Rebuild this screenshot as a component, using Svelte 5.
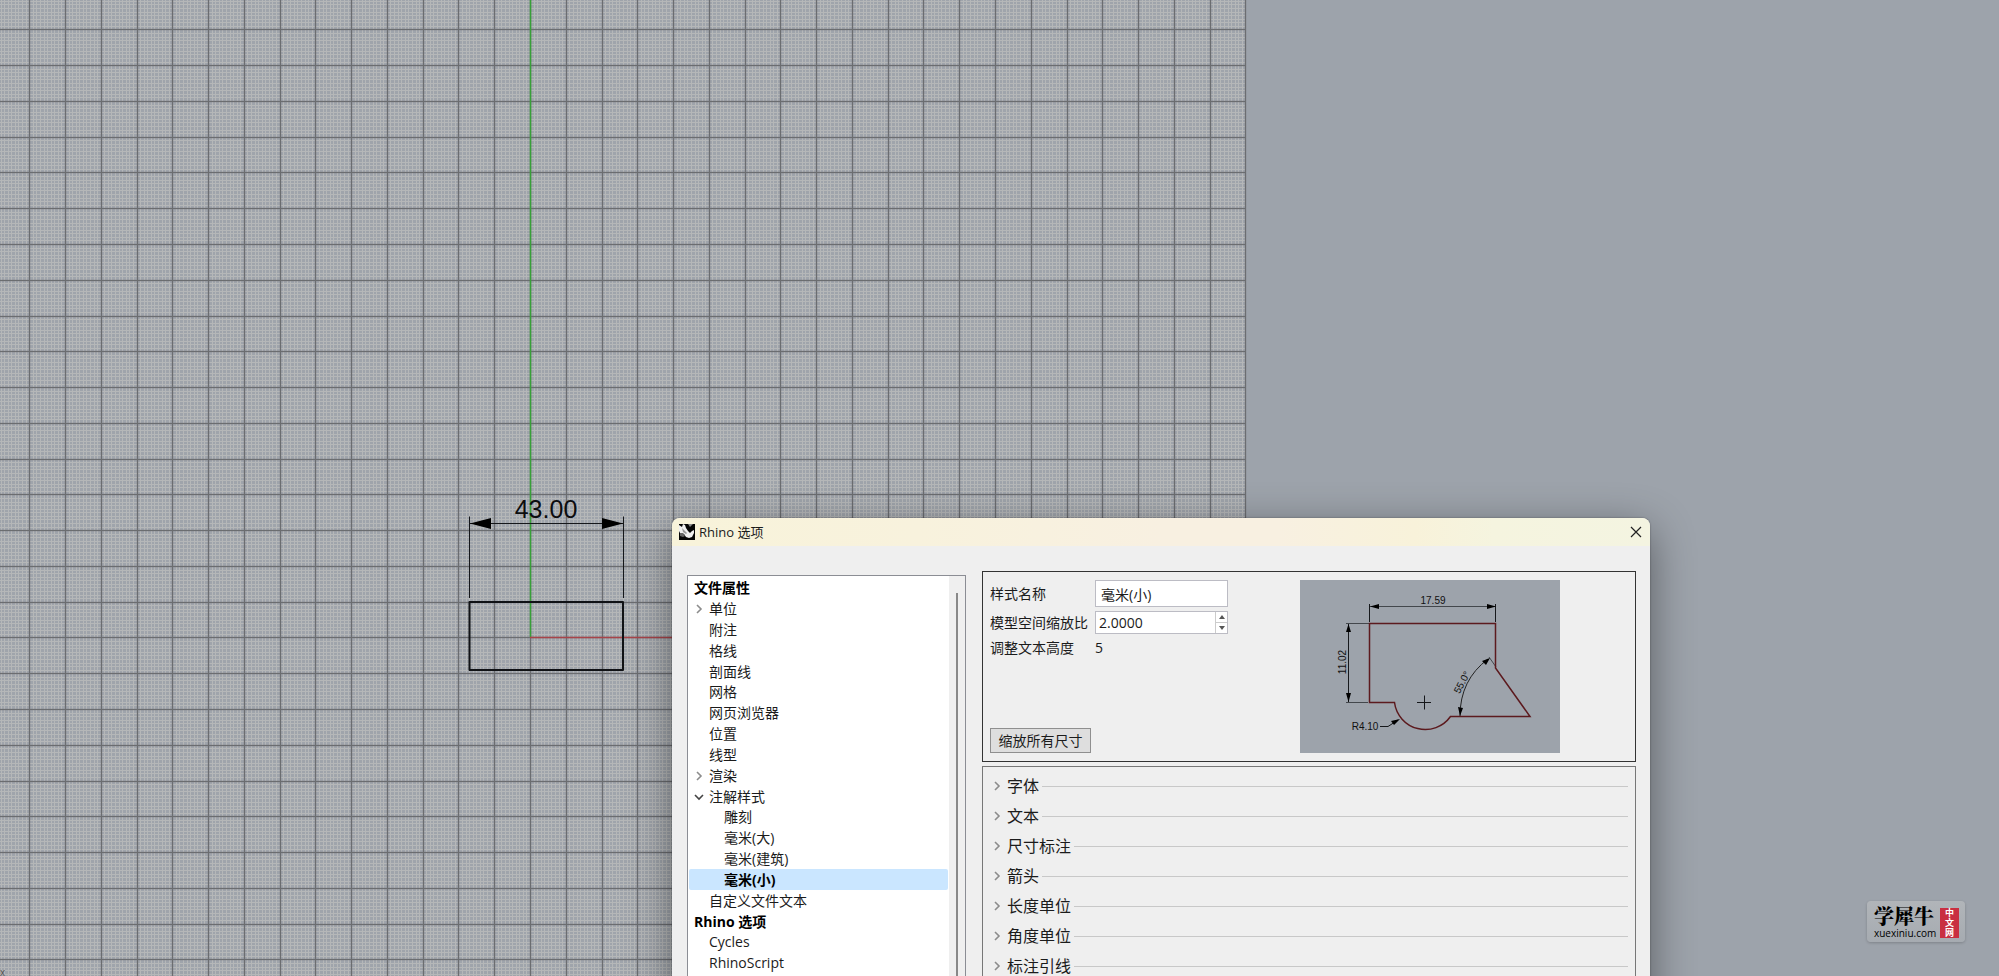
<script>
  const tree = [
    { text: '文件属性', level: 0, bold: true },
    { text: '单位', level: 1, arrow: 'right' },
    { text: '附注', level: 1 },
    { text: '格线', level: 1 },
    { text: '剖面线', level: 1 },
    { text: '网格', level: 1 },
    { text: '网页浏览器', level: 1 },
    { text: '位置', level: 1 },
    { text: '线型', level: 1 },
    { text: '渲染', level: 1, arrow: 'right' },
    { text: '注解样式', level: 1, arrow: 'down' },
    { text: '雕刻', level: 2 },
    { text: '毫米(大)', level: 2 },
    { text: '毫米(建筑)', level: 2 },
    { text: '毫米(小)', level: 2, bold: true, selected: true },
    { text: '自定义文件文本', level: 1 },
    { text: 'Rhino 选项', level: 0, bold: true },
    { text: 'Cycles', level: 1 },
    { text: 'RhinoScript', level: 1 }
  ];
  const sections = ['字体', '文本', '尺寸标注', '箭头', '长度单位', '角度单位', '标注引线'];

  const originX = 530;
  const originY = 637.49;
  const pitch = 35.77;
  const steps = (n, f) => Array.from({ length: n }, (_, i) => f(i));
  const majorX = steps(35, (i) => originX + (i - 14) * pitch);
  const majorY = steps(27, (i) => originY + (i - 17) * pitch);
  const minorX = steps(349, (i) => originX + ((i - 148) * pitch) / 10);
  const minorY = steps(275, (i) => originY + ((i - 178) * pitch) / 10);
  const vertical = (xs) => xs.map((x) => `M${Math.round(x) + 0.5} 0V976`).join('');
  const horizontal = (ys) => ys.map((y) => `M0 ${Math.round(y) + 0.5}H1245`).join('');
  const minorPath = vertical(minorX) + horizontal(minorY);
  const majorPath = vertical(majorX) + horizontal(majorY);

  let name = $state('毫米(小)');
  let scale = $state('2.0000');
</script>

<main class="viewport">
  <svg class="canvas" width="1999" height="976" viewBox="0 0 1999 976" aria-hidden="true">
    <rect width="1245" height="976" fill="#9fa4ab" />
    <path d={minorPath} stroke="#b5b7b8" stroke-width="1" shape-rendering="crispEdges" />
    <path d={majorPath} stroke="#6b6d70" stroke-opacity="0.3" stroke-width="2" />
    <path d={majorPath} stroke="#6b6d70" stroke-width="1" shape-rendering="crispEdges" />
    <path d="M530.5 0V637" stroke="#37a037" stroke-width="1.5" />
    <path d="M530 637.5H700" stroke="#a84449" stroke-width="1.5" />
    <path d="M469.500 516.500V598M623.500 516.500V598M470 523.500H623" stroke="#15171a" fill="none" />
    <path d="M470 523.500L491 518V529ZM623 523.500L602 518V529Z" fill="#000" />
    <rect x="469.500" y="602" width="153.500" height="68" fill="none" stroke="#101215" stroke-width="2" stroke-linejoin="round" />
    <text x="546" y="518" class="measure">43.00</text>
    <text x="0" y="976" class="axis">x</text>
  </svg>

  <section class="dialog" aria-label="Rhino 选项">
    <header>
      <svg width="16" height="16" viewBox="0 0 16 16" aria-hidden="true">
        <rect width="16" height="16" fill="#050505" />
        <path d="M0 1L3 3L4 0L6 1L7 4L9 7L11 9L13 7L15 6L15 9L13 13L10 14L7 13L5 10L1 9L0 7Z" fill="#f0f0f0" />
        <path d="M1 9L4 9L6 12L4 13L1 12Z" fill="#666" />
        <path d="M3 4L6 7L8 9L7 10L4 8Z" fill="#999" />
        <path d="M9 0H14L11 3Z" fill="#8a8a8a" />
      </svg>
      <h1>Rhino 选项</h1>
      <button class="close" aria-label="关闭">
        <svg width="12" height="12" viewBox="0 0 12 12"><path d="M1 1L11 11M11 1L1 11" stroke="#222" stroke-width="1.2" /></svg>
      </button>
    </header>
    <div class="body">
      <nav>
        <ul>
          {#each tree as item}
            <li class="level{item.level}" class:bold={item.bold} class:selected={item.selected}>
              {#if item.level === 1}
                <span class="arrow">
                  {#if item.arrow === 'right'}
                    <svg width="10" height="10" viewBox="0 0 10 10"><path d="M3 1L7 5L3 9" fill="none" stroke="#8c8c8c" stroke-width="1.6" /></svg>
                  {:else if item.arrow === 'down'}
                    <svg width="10" height="10" viewBox="0 0 10 10"><path d="M1 3L5 7L9 3" fill="none" stroke="#444" stroke-width="1.6" /></svg>
                  {/if}
                </span>
              {/if}
              <span>{item.text}</span>
            </li>
          {/each}
        </ul>
        <div class="track"><div class="thumb"></div></div>
      </nav>
      <div class="content">
        <div class="summary">
          <form>
            <div class="fields">
              <label for="style-name">样式名称</label>
              <input id="style-name" class="name" bind:value={name} />
              <label for="model-scale">模型空间缩放比</label>
              <div class="spinner">
                <input id="model-scale" bind:value={scale} />
                <div class="spin">
                  <button type="button" aria-label="增加"><svg width="6" height="4" viewBox="0 0 6 4"><path d="M0 4L3 0L6 4Z" fill="#555" /></svg></button>
                  <button type="button" aria-label="减少"><svg width="6" height="4" viewBox="0 0 6 4"><path d="M0 0L3 4L6 0Z" fill="#555" /></svg></button>
                </div>
              </div>
              <span>调整文本高度</span>
              <output>5</output>
            </div>
            <button type="button" class="scale-all">缩放所有尺寸</button>
          </form>
          <svg class="preview" width="260" height="173" viewBox="0 0 260 173" aria-hidden="true">
            <rect width="260" height="173" fill="#9da3ab" />
            <g fill="none" stroke="#43474c">
              <path d="M70 26.500H196M46 43.500H69M46 122.500H68M189 77L196 87" />
              <path d="M69.500 24V42M195.500 24V42M48.500 44V122" stroke="#17191c" />
              <path d="M160 136Q160 100 188 79" stroke="#222" />
              <path d="M80 146.500H88L98 140M117 122.500H131M124.500 115.500V129.500" stroke="#15171a" />
            </g>
            <path d="M69.500 43.500H195.500V88L230 136.500H150.500A31 31 0 0 1 94.500 122.500H69.500Z" fill="none" stroke="#5c1a1e" stroke-width="1.5" />
            <path d="M70 26.500L79 24V29ZM196 26.500L187 24V29ZM48.500 44L46 52H51ZM48.500 122L46 113H51ZM190 78L186 85L182 81ZM160 136L158 127L163 128ZM100 139L94 145L91 141Z" fill="#000" />
            <text x="133" y="24">17.59</text>
            <text transform="translate(46 82) rotate(-90)">11.02</text>
            <text transform="translate(165 104) rotate(-62)">55.0°</text>
            <text x="65" y="150">R4.10</text>
          </svg>
        </div>
        <div class="sections">
          {#each sections as section}
            <button type="button" class="section">
              <svg width="10" height="10" viewBox="0 0 10 10"><path d="M3 1L7 5L3 9" fill="none" stroke="#8c8c8c" stroke-width="1.6" /></svg>
              <span>{section}</span>
              <i></i>
            </button>
          {/each}
        </div>
      </div>
    </div>
  </section>

  <aside class="brand">
    <div class="brand-name"><strong>学犀牛</strong><span>xuexiniu.com</span></div>
    <div class="seal"><span>中</span><span>文</span><span>网</span></div>
  </aside>
</main>

<style>
  :global(body) { margin: 0; }
  .viewport {
    position: relative;
    height: 100vh;
    overflow: hidden;
    background: #9da3ab;
    font: 14px/20px "Open Sans", "Noto Sans CJK SC", sans-serif;
    color: #1b1b1b;
  }
  .canvas { position: absolute; left: 0; top: 0; }
  .measure { font: 25px "Liberation Sans", sans-serif; text-anchor: middle; fill: #0c0d0f; }
  .axis { font: 10px "Liberation Sans", sans-serif; fill: #555; }
  .dialog {
    position: absolute;
    left: 672px;
    top: 518px;
    width: 978px;
    height: 640px;
    display: flex;
    flex-direction: column;
    border-radius: 8px;
    overflow: hidden;
    background: #efefef;
    box-shadow: 0 0 2px #0006, 0 12px 44px #00000073;
  }
  header {
    display: flex;
    align-items: center;
    gap: 4px;
    height: 28px;
    padding: 0 8px 0 7px;
    background: linear-gradient(90deg, #f8f3da 0%, #f8f2dd 25%, #f8f0e1 50%, #f8f0e1 62%, #f8f2da 76%, #f5f4df 84%, #f4f4e1 100%);
  }
  h1 { flex: 1; margin: 0; font-size: 13px; font-weight: 400; }
  button { font: inherit; color: inherit; padding: 0; margin: 0; border: 0; background: none; }
  .close { display: flex; }
  .body { flex: 1; display: flex; gap: 16px; padding: 25px 14px 0 15px; }
  nav {
    flex: 0 0 277px;
    display: flex;
    margin-top: 4px;
    border: 1px solid #8b8d94;
    background: #fff;
  }
  ul { flex: 1; margin: 0; padding: 1px; list-style: none; font-size: 14px; }
  li { display: flex; align-items: center; height: 21px; line-height: 20px; padding-left: 5px; border-radius: 2px; white-space: nowrap; }
  li:nth-child(6n) { height: 20px; }
  .level1 { padding-left: 4px; }
  .level2 { padding-left: 35px; }
  .bold { font-weight: 700; color: #000; }
  .selected { background: #cae6ff; }
  .arrow { display: flex; justify-content: center; width: 12px; margin-right: 4px; }
  .track { width: 16px; display: flex; justify-content: center; background: #efefef; }
  .thumb { width: 2px; margin-top: 17px; background: #888; }
  .content { flex: 1; display: flex; flex-direction: column; gap: 4px; }
  .summary {
    display: flex;
    box-sizing: border-box;
    height: 191px;
    padding: 8px 75px 8px 7px;
    border: 1px solid #333;
  }
  form { flex: 1; display: flex; flex-direction: column; justify-content: space-between; align-items: flex-start; }
  .fields { display: grid; grid-template-columns: 105px 133px; align-items: center; row-gap: 4px; white-space: nowrap; }
  .fields input { box-sizing: border-box; width: 100%; font: inherit; color: inherit; outline: 0; background: #fff; border: 1px solid #bcbcc4; border-radius: 0; }
  .fields .name { height: 27px; padding: 0 5px; }
  .spinner { box-sizing: border-box; display: flex; height: 23px; border: 1px solid #bcbcc4; background: #fff; }
  .fields .spinner input { flex: 1; min-width: 0; padding: 0 3px; border: 0; }
  .spin { display: flex; flex-direction: column; width: 11px; border-left: 1px solid #ccc; }
  .spin button { flex: 1; display: flex; align-items: center; justify-content: center; }
  .spin button + button { border-top: 1px solid #ccc; }
  .scale-all { width: 101px; height: 25px; border: 1px solid #8f8f8f; background: #dedede; }
  .preview { font: 10px "Liberation Sans", sans-serif; text-anchor: middle; fill: #111; }
  .sections { flex: 1; padding: 5px 7px 0 9px; border: 1px solid #777; }
  .section { display: flex; align-items: center; width: 100%; height: 28px; margin-bottom: 2px; font-size: 16px; line-height: 24px; }
  .section span { margin: 0 3px 0 5px; }
  .section i { flex: 1; height: 1px; background: #c8c8c8; }
  .brand {
    position: absolute;
    right: 34px;
    bottom: 34px;
    box-sizing: border-box;
    width: 98px;
    height: 41px;
    display: flex;
    justify-content: space-between;
    padding: 4px 6px 4px 7px;
    border-radius: 4px;
    background: linear-gradient(#b1b5b9, #a6abb1);
    box-shadow: 0 1px 3px #0003;
  }
  .brand-name { display: flex; flex-direction: column; color: #000; }
  .brand-name strong { font: 900 20px/22px "Noto Serif CJK SC", "Noto Sans CJK SC", serif; }
  .brand-name span { font: 10px/12px "Open Sans", sans-serif; }
  .seal { width: 19px; height: 30px; margin-top: 3px; display: flex; flex-direction: column; align-items: center; background: #c92f41; color: #fff; font: 700 9px/10px "Noto Sans CJK SC", sans-serif; }
</style>
